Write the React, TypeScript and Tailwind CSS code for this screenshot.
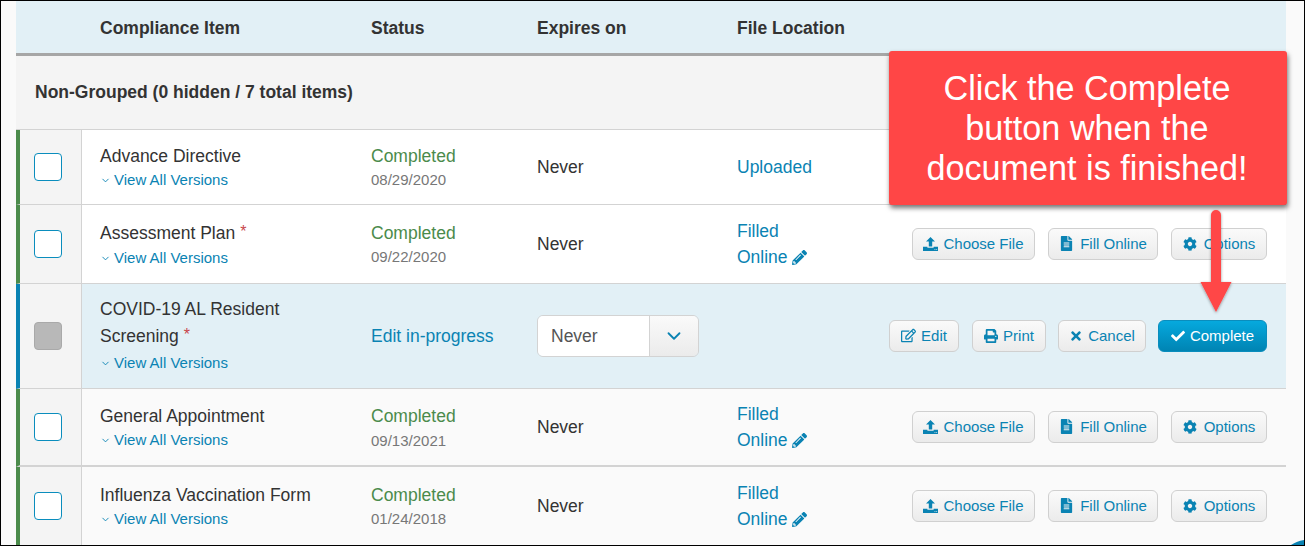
import { FaFileAlt, FaCog, FaRegEdit, FaPrint, FaTimes, FaCheck, FaPencilAlt } from "react-icons/fa";
import { LuChevronDown } from "react-icons/lu";
import type { ReactNode } from "react";

const GRID = "grid grid-cols-[62px_289px_166px_200px_1fr]";

function UploadIcon() {
  return (
    <svg width="15" height="14" viewBox="0 0 15 14" fill="currentColor">
      <path d="M7.500 0 12 4.600H9.200V9.500H5.800V4.600H3z" />
      <path fillRule="evenodd" d="M0 9.800h4.400v1h6.200v-1H15V14H0zM11.500 12v.8h.9V12zM13.200 12v.8h.9V12z" />
    </svg>
  );
}

function Btn({ icon, label, w, primary }: { icon: ReactNode; label: string; w: string; primary?: boolean }) {
  return (
    <button
      className={`${w} h-[32px] pb-[1px] flex items-center justify-center gap-[5px] rounded-[6px] border text-[15px] leading-none ${
        primary
          ? "border-[#0a8dbd] bg-gradient-to-b from-[#06a9de] to-[#0084b3] text-white"
          : "border-[#d0d0d0] bg-gradient-to-b from-[#fafafa] to-[#ebebeb] text-[#0a83b3]"
      }`}
    >
      {icon}
      <span>{label}</span>
    </button>
  );
}

function FileActions() {
  return (
    <div className="flex items-center justify-end gap-[13px] pr-[19px]">
      <Btn w="w-[123px]" label="Choose File" icon={<UploadIcon />} />
      <Btn w="w-[110px]" label="Fill Online" icon={<FaFileAlt className="text-[15px] mr-[1px]" />} />
      <Btn w="w-[96px]" label="Options" icon={<FaCog className="text-[14px] mr-[2px]" />} />
    </div>
  );
}

function ActiveActions() {
  return (
    <div className="flex items-center justify-end gap-[12px] pr-[19px]">
      <div className="mr-[1px]">
        <Btn w="w-[70px]" label="Edit" icon={<FaRegEdit className="text-[15px]" />} />
      </div>
      <Btn w="w-[74px]" label="Print" icon={<FaPrint className="text-[14px]" />} />
      <Btn w="w-[88px]" label="Cancel" icon={<FaTimes className="text-[14px]" />} />
      <Btn w="w-[109px]" primary label="Complete" icon={<FaCheck className="text-[14px]" />} />
    </div>
  );
}

function Versions({ tall }: { tall?: boolean }) {
  return (
    <div className={`flex items-center text-[15px] text-[#0a83b3] ${tall ? "leading-[26px]" : "leading-[24px]"}`}>
      <LuChevronDown className="w-[11px] h-[11px] mr-[3px] mt-[1px]" />
      View All Versions
    </div>
  );
}

function Star() {
  return <span className="text-[#c8464b] text-[16px] ml-[5px] relative -top-[2px]">*</span>;
}

function Filled() {
  return (
    <div className="text-[17.5px] leading-[26px] text-[#0a83b3]">
      <div>Filled</div>
      <div className="flex items-center gap-[4px]">
        Online <FaPencilAlt className="text-[15px]" />
      </div>
    </div>
  );
}

function Row({
  height,
  bg,
  bar,
  sep,
  checkbox,
  title,
  status,
  expires,
  file,
}: {
  height: string;
  bg: string;
  bar: string;
  sep: string;
  checkbox: ReactNode;
  title: ReactNode;
  status: ReactNode;
  expires: ReactNode;
  file: ReactNode;
}) {
  return (
    <div className={`${GRID} ${height} ${bg} ${sep} border-l-4 ${bar}`}>
      <div className="flex items-center justify-center bg-[#f4f4f4] border-r border-[#d3d3d3] pr-[5px]">{checkbox}</div>
      <div className="flex flex-col justify-center pl-[18px] text-[#333]">{title}</div>
      <div className="flex flex-col justify-center">{status}</div>
      <div className="flex items-center">{expires}</div>
      <div className="flex items-center">{file}</div>
    </div>
  );
}

const Box = () => <div className="w-[28px] h-[28px] rounded-[4px] border border-[#0a8dbd] bg-white" />;
const Done = ({ date, wide }: { date: string; wide?: boolean }) => (
  <div className="pt-[1px]">
    <div className={`text-[17.5px] text-[#4b8b4b] ${wide ? "leading-[26px]" : "leading-[24px]"}`}>Completed</div>
    <div className="text-[15px] leading-[24px] text-[#777]">{date}</div>
  </div>
);
const Never = () => <span className="text-[17.5px] text-[#333] pt-[1px]">Never</span>;
const Title = ({ children, leading = "leading-[24px]" }: { children: ReactNode; leading?: string }) => (
  <div className={`text-[17.5px] ${leading}`}>{children}</div>
);
const Item = ({ children }: { children: ReactNode }) => (
  <div className="pt-[2px]">
    <Title>{children}</Title>
    <Versions />
  </div>
);
const FileRow = () => (
  <div className="flex w-full items-center justify-between">
    <Filled />
    <FileActions />
  </div>
);

export default function App() {
  return (
    <div className="relative w-[1305px] h-[546px] overflow-hidden border border-black bg-[#fafafa] font-['Liberation_Sans',Arial,sans-serif]">
      <div className="ml-[15px] w-[1270px]">
        <div className={`${GRID} h-[52px] pt-[2px] bg-[#e2f0f6] border-l-4 border-transparent items-center font-bold text-[17.5px] text-[#333]`}>
          <div />
          <div className="pl-[18px]">Compliance Item</div>
          <div>Status</div>
          <div>Expires on</div>
          <div>File Location</div>
        </div>
        <div className="h-[3px] bg-[#a6a6a6]" />
        <div className="h-[74px] bg-[#f4f4f4] border-b border-[#d3d3d3] flex items-center pl-[19px] font-bold text-[17.5px] text-[#333]">
          Non-Grouped (0 hidden / 7 total items)
        </div>

        <Row height="h-[75px]" bg="bg-white" bar="border-l-[#4b8b4b]" sep="border-b border-b-[#d3d3d3]" checkbox={<Box />}
          title={<Item>Advance Directive</Item>}
          status={<Done date="08/29/2020" />} expires={<Never />}
          file={<span className="text-[17.5px] text-[#0a83b3] pt-[1px]">Uploaded</span>} />
        <Row height="h-[79px]" bg="bg-white" bar="border-l-[#4b8b4b]" sep="border-b border-b-[#d3d3d3]" checkbox={<Box />}
          title={<Item>Assessment Plan<Star /></Item>}
          status={<Done date="09/22/2020" />} expires={<Never />}
          file={<FileRow />} />
        <Row height="h-[105px]" bg="bg-[#e2f0f6]" bar="border-l-[#0a83b3]" sep="border-b border-b-[#d3d3d3]"
          checkbox={<div className="w-[28px] h-[28px] rounded-[4px] border border-[#a9a9a9] bg-[#b8b8b8]" />}
          title={<><Title leading="leading-[27px]">COVID-19 AL Resident</Title><Title leading="leading-[27px]">Screening<Star /></Title><Versions tall /></>}
          status={<div className="text-[17.5px] text-[#0a83b3] pt-[1px]">Edit in-progress</div>}
          expires={
            <div className="flex h-[42px] w-[162px] rounded-[6px] border border-[#d3d3d3] overflow-hidden">
              <div className="w-[112px] bg-white flex items-center pl-[13px] text-[17.5px] text-[#555] border-r border-[#d3d3d3]">Never</div>
              <div className="flex-1 bg-gradient-to-b from-[#fafafa] to-[#ebebeb] flex items-center justify-center text-[#0a83b3]">
                <LuChevronDown className="w-[22px] h-[22px]" />
              </div>
            </div>
          }
          file={<div className="flex w-full items-center justify-end"><ActiveActions /></div>} />
        <Row height="h-[78px]" bg="bg-[#fafafa]" bar="border-l-[#4b8b4b]" sep="border-b-2 border-b-[#d3d3d3]" checkbox={<Box />}
          title={<Item>General Appointment</Item>}
          status={<Done date="09/13/2021" wide />} expires={<Never />}
          file={<FileRow />} />
        <Row height="h-[78px]" bg="bg-[#fafafa]" bar="border-l-[#4b8b4b]" sep="" checkbox={<Box />}
          title={<Item>Influenza Vaccination Form</Item>}
          status={<Done date="01/24/2018" />} expires={<Never />}
          file={<FileRow />} />
      </div>

      <div className="absolute left-[888px] top-[50px] w-[398px] h-[154px] pr-[2px] rounded-[3px] bg-[#ff4646] shadow-[1px_3px_5px_rgba(0,0,0,0.55)] flex items-center justify-center text-center text-white text-[34.2px] leading-[40px]">
        <div>Click the Complete<br />button when the<br />document is finished!</div>
      </div>

      <svg className="absolute left-[1195px] top-[205px]" width="44" height="110" viewBox="0 0 44 110">
        <defs>
          <filter id="s" x="-30%" y="-10%" width="160%" height="120%">
            <feDropShadow dx="0" dy="1" stdDeviation="1.500" floodColor="#000" floodOpacity="0.4" />
          </filter>
        </defs>
        <path d="M15 9a5 5 0 0 1 10 0v67h10.500L20 106 4.500 76H15z" fill="#ff4646" filter="url(#s)" />
      </svg>

      <svg className="absolute right-0 bottom-0" width="13" height="5" viewBox="0 0 13 5">
        <path d="M0 5C3 3 8 .5 13 0v5z" fill="#0a83b3" />
      </svg>
    </div>
  );
}
